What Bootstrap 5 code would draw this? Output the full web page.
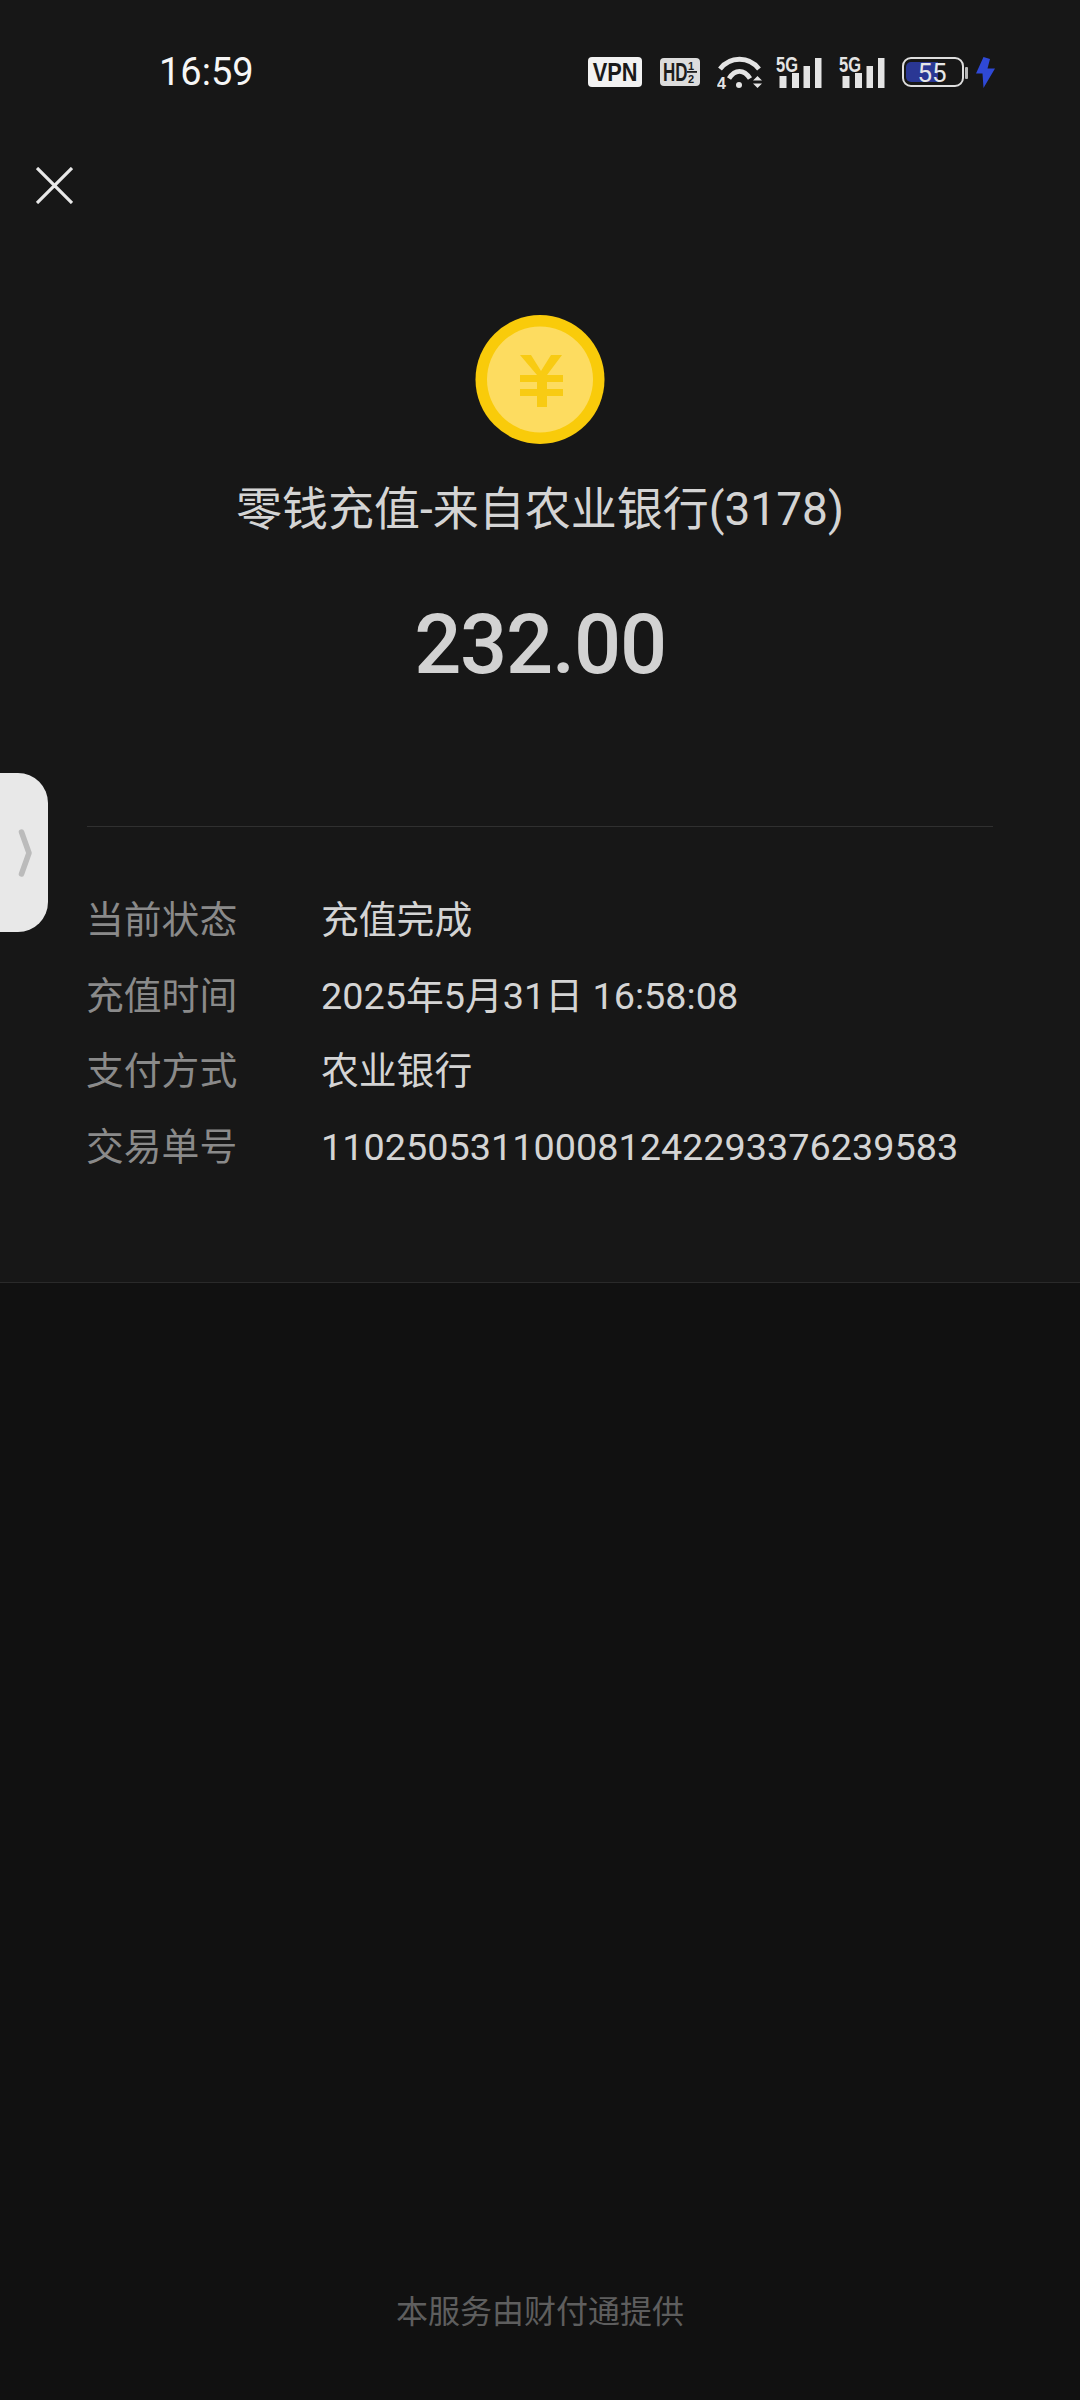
<!DOCTYPE html>
<html lang="zh-CN">
<head>
    <meta charset="UTF-8">
    <meta name="viewport" content="width=device-width, initial-scale=1.0">
    <title>零钱充值</title>
    <link href="https://cdn.jsdelivr.net/npm/bootstrap@5.3.0/dist/css/bootstrap.min.css" rel="stylesheet">
    <style>
        body {
            width: 1080px;
            height: 2400px;
            background: #111111;
            font-family: Roboto, "Noto Sans CJK SC", sans-serif;
            overflow: hidden;
        }
        .sheet { height: 1283px; background: #171717; border-bottom: 1px solid #2a2a2a; }

        /* status bar */
        .status-row { height: 144px; padding: 0 85px 0 159px; }
        .clock { font-size: 38px; font-weight: 400; color: #f6f6f6; line-height: 1; }
        .status-row svg { display: block; }
        .status-row text { font-family: "Liberation Sans", sans-serif; font-weight: 700; }
        .batt-wrap { margin-left: 17px; }
        .gap-wifi { margin-left: 17px; }
        .gap-sig { margin-left: 14px; }
        .gap-sig2 { margin-left: 17px; }
        .gap-hd { margin-left: 18px; }

        .close-icon { margin: 23px 0 0 36px; display: block; }
        .coin-icon { margin-top: 111px; }
        .pay-title { margin-top: 34px; font-size: 46px; line-height: 60px; color: #d4d4d4; }
        .pay-amount { margin-top: 56px; font-size: 83px; line-height: 100px; font-weight: 500; color: #d2d2d2; letter-spacing: -1.2px; }
        .split { margin: 131px 87px 0; height: 1px; background: #303030; }

        .info-list { margin: 56px 0 0 86px; }
        .info-row { height: 75.5px; font-size: 37.8px; }
        .info-key { width: 235px; color: #8a8a8a; }
        .info-val { color: #d4d4d4; white-space: nowrap; }

        /* pull tab on the left edge */
        .side-tab {
            position: absolute; left: 0; top: 773px;
            width: 48px; height: 159px;
            background: #e8e8e8;
            border-radius: 0 30px 30px 0;
        }
        .side-tab svg { display: block; }

        .provider { padding-bottom: 63px; font-size: 32px; line-height: 50px; color: #5e5e5e; }
    </style>
</head>
<body class="d-flex flex-column position-relative">
    <div class="sheet">
        <div class="status-row d-flex align-items-center justify-content-between">
            <span class="clock">16:59</span>
            <div class="d-flex align-items-center">
                <!-- VPN -->
                <svg width="54" height="30" viewBox="0 0 54 30">
                    <rect width="54" height="30" rx="4" fill="#f2f2f2"/>
                    <text transform="translate(27 24) scale(.87 1)" text-anchor="middle" font-size="25" fill="#1a1a1a">VPN</text>
                </svg>
                <!-- HD 1/2 -->
                <svg class="gap-hd" width="40" height="28" viewBox="0 0 40 28">
                    <rect width="40" height="28" rx="4" fill="#dcdcdc"/>
                    <text transform="translate(3 23) scale(.68 1)" font-size="25" fill="#1c1c1c">HD</text>
                    <text x="28" y="11.5" font-size="11" fill="#1c1c1c">1</text>
                    <rect x="27" y="13" width="10" height="1.8" fill="#1c1c1c"/>
                    <text x="28" y="25" font-size="11" fill="#1c1c1c">2</text>
                </svg>
                <!-- wifi -->
                <svg class="gap-wifi" width="45" height="41" viewBox="0 -4 45 41">
                    <path d="M3 13C13 0 32 0 42 13" fill="none" stroke="#e4e4e4" stroke-width="4.8"/>
                    <path d="M12 22.5C18 13 27 13 33 22.5" fill="none" stroke="#e4e4e4" stroke-width="4.8"/>
                    <circle cx="22" cy="29" r="3" fill="#e4e4e4"/>
                    <text x="0" y="32.5" font-size="16" fill="#e4e4e4">4</text>
                    <path d="M36 24.5H45L40.5 20ZM36 27.5H45L40.5 32Z" fill="#e4e4e4"/>
                </svg>
                <!-- SIM 1 -->
                <svg class="gap-sig" width="46" height="49" viewBox="0 -8 46 49">
                    <text transform="translate(0 15.5) scale(.75 1)" font-size="22" fill="#e4e4e4">5G</text>
                    <rect x="3.5" y="20" width="7" height="12" fill="#e4e4e4"/>
                    <rect x="16" y="17" width="7" height="15" fill="#e4e4e4"/>
                    <rect x="27.5" y="10" width="6.5" height="22" fill="#e4e4e4"/>
                    <rect x="39" y="2" width="6.5" height="30" fill="#e4e4e4"/>
                </svg>
                <!-- SIM 2 -->
                <svg class="gap-sig2" width="46" height="49" viewBox="0 -8 46 49">
                    <text transform="translate(0 15.5) scale(.75 1)" font-size="22" fill="#e4e4e4">5G</text>
                    <rect x="3.5" y="20" width="7" height="12" fill="#e4e4e4"/>
                    <rect x="16" y="17" width="7" height="15" fill="#e4e4e4"/>
                    <rect x="27.5" y="10" width="6.5" height="22" fill="#e4e4e4"/>
                    <rect x="39" y="2" width="6.5" height="30" fill="#e4e4e4"/>
                </svg>
                <!-- battery with charge bolt -->
                <svg class="batt-wrap" width="93" height="33" viewBox="0 0 93 33">
                    <rect x="1" y="2" width="60" height="28" rx="8" fill="none" stroke="#dedede" stroke-width="2"/>
                    <path d="M9 6H36V26H9A5 5 0 0 1 4 21V11A5 5 0 0 1 9 6Z" fill="#2a3794"/>
                    <text x="30" y="25.5" text-anchor="middle" font-size="26" style="font-family:Roboto,sans-serif;font-weight:400" fill="#e6e6e6">55</text>
                    <rect x="63" y="11" width="3" height="12" rx="1" fill="#b8b8b8"/>
                    <path d="M81.5 1L74 17.5H80.5L81.5 32L93 12.5H85.5L88 3Z" fill="#2f49d6"/>
                </svg>
            </div>
        </div>

        <svg class="close-icon" width="37" height="37" viewBox="0 0 37 37">
            <path d="M1 1L36 36M36 1L1 36" stroke="#e8e8e8" stroke-width="3.2" fill="none"/>
        </svg>

        <div class="text-center">
            <svg class="coin-icon" width="130" height="130" viewBox="0 0 130 130">
                <circle cx="65" cy="64.5" r="64.5" fill="#f9cb0a"/>
                <circle cx="65" cy="64.5" r="53" fill="#fddc60"/>
                <path d="M45 40H56L66 56L76 40H87L72 60V92H62V60Z" fill="#f8cb13"/>
                <rect x="45" y="60" width="43" height="7" fill="#f8cb13"/>
                <rect x="45" y="74" width="43" height="7" fill="#f8cb13"/>
            </svg>
            <div class="pay-title">零钱充值-来自农业银行(3178)</div>
            <div class="pay-amount">232.00</div>
        </div>

        <div class="split"></div>

        <div class="info-list">
            <div class="info-row d-flex align-items-center">
                <span class="info-key">当前状态</span><span class="info-val">充值完成</span>
            </div>
            <div class="info-row d-flex align-items-center">
                <span class="info-key">充值时间</span><span class="info-val">2025年5月31日 16:58:08</span>
            </div>
            <div class="info-row d-flex align-items-center">
                <span class="info-key">支付方式</span><span class="info-val">农业银行</span>
            </div>
            <div class="info-row d-flex align-items-center">
                <span class="info-key">交易单号</span><span class="info-val">110250531100081242293376239583</span>
            </div>
        </div>
    </div>

    <div class="side-tab">
        <svg width="48" height="159" viewBox="0 0 48 159">
            <path d="M21.5 59L29 80L21.5 101" fill="none" stroke="#bbbbbb" stroke-width="5.5" stroke-linecap="round" stroke-linejoin="round"/>
        </svg>
    </div>

    <div class="provider mt-auto text-center">本服务由财付通提供</div>

    <script src="https://cdn.jsdelivr.net/npm/bootstrap@5.3.0/dist/js/bootstrap.bundle.min.js"></script>
</body>
</html>
